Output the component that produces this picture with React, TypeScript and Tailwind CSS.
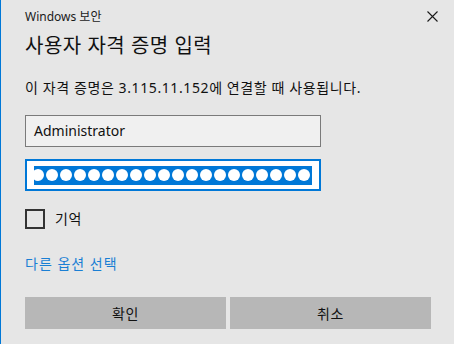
import React from 'react';

const font = "font-['Segoe_UI','Noto_Sans','Noto_Sans_CJK_KR',sans-serif]";

const CloseIcon = () => (
  <svg width="11" height="11" viewBox="0 0 11 11" className="block">
    <path d="M0.5 0.5 L10.5 10.5 M10.5 0.5 L0.5 10.5" stroke="#1a1a1a" strokeWidth="1.1" />
  </svg>
);

const PasswordDots = ({ count }: { count: number }) => (
  <div className="h-[19px] w-[278px] overflow-hidden bg-[#0078d7] flex items-center">
    <div className="flex -ml-[2px]">
      {Array.from({ length: count }).map((_, i) => (
        <span key={i} className="w-[12px] h-[12px] rounded-full bg-white mr-[2px] shrink-0" />
      ))}
    </div>
  </div>
);

const App = () => {
  return (
    <div className={`w-[454px] h-[344px] bg-[#e6e6e6] border-l border-[#0078d7] text-[#000] ${font} overflow-hidden`}>
      <div className="pl-6 pr-4 flex flex-col">
        {/* Header */}
        <div className="flex items-center justify-between h-[32px] pt-[1px]">
          <span className="text-[12px] leading-4 text-[#1a1a1a]">Windows 보안</span>
          <div className="mr-[0px]">
            <CloseIcon />
          </div>
        </div>

        <h1 className="text-[20px] leading-7 font-normal tracking-[0.5px] text-[#111]">사용자 자격 증명 입력</h1>

        <p className="mt-[18px] text-[14px] leading-5 tracking-[0.6px] text-[#111]">
          이 자격 증명은 3.115.11.152에 연결할 때 사용됩니다.
        </p>

        {/* Username */}
        <div className="mt-[17px] w-[296px] h-[32px] bg-[#f0f0f0] border border-[#7a7a7a] flex items-center px-2">
          <span className="text-[14px] leading-5 text-[#111]">Administrator</span>
        </div>

        {/* Password */}
        <div className="mt-[12px] w-[296px] h-[32px] bg-white border-2 border-[#0078d7] flex items-center pl-[7px]">
          <PasswordDots count={20} />
        </div>

        {/* Remember */}
        <label className="mt-[18px] flex items-center gap-[10px]">
          <span className="w-[20px] h-[20px] border-2 border-[#333] bg-transparent" />
          <span className="text-[14px] leading-5 tracking-[0.5px] text-[#111]">기억</span>
        </label>

        <a className="mt-[25px] text-[14px] leading-5 tracking-[1px] text-[#1a7fd4] w-fit">다른 옵션 선택</a>

        {/* Buttons */}
        <div className="mt-[23px] flex gap-1 w-[406px]">
          <button className="flex-1 h-[32px] bg-[#b7b7b7] text-[14px] tracking-[0.5px] text-[#111]">확인</button>
          <button className="flex-1 h-[32px] bg-[#b7b7b7] text-[14px] tracking-[0.5px] text-[#111]">취소</button>
        </div>
      </div>
    </div>
  );
};

export default App;
